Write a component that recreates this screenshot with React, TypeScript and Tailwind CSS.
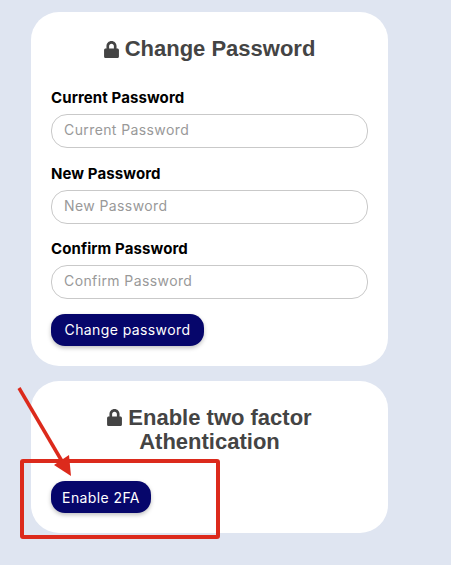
import { FaLock } from "react-icons/fa";

const fields = ["Current Password", "New Password", "Confirm Password"];

const btn =
  "h-[32px] rounded-[14px] bg-[#06066b] text-[14px] tracking-[0.4px] text-white shadow-[0_2px_4px_rgba(0,0,0,0.25)] [font-family:Inter,sans-serif]";

const App = () => {
  return (
    <div className="relative h-[565px] w-[451px] overflow-hidden bg-[#dfe5f1] pt-3 [font-family:'Liberation_Sans',Arial,sans-serif]">
      <div className="ml-[31px] flex w-[357px] flex-col gap-[15px]">
        <section className="h-[354px] rounded-[28px] bg-white px-5 pt-[24px]">
          <h2 className="flex items-center justify-center gap-[6px] text-[22px] leading-[26px] font-bold text-[#444]">
            <FaLock className="h-[17px] w-[15px]" />
            Change Password
          </h2>
          <form className="mt-[26px] flex flex-col gap-[15.5px]">
            {fields.map((f) => (
              <div key={f} className="flex flex-col gap-[6px]">
                <label className="text-[15px] leading-[20px] font-bold tracking-[0.1px] text-black [font-family:Inter,sans-serif]">
                  {f}
                </label>
                <input
                  placeholder={f}
                  className="h-[34px] w-full rounded-[16px] border border-[#c9c9c9] bg-white px-[12px] pb-[3px] text-[14px] tracking-[0.4px] outline-none [font-family:Inter,sans-serif] placeholder:text-[#999]"
                />
              </div>
            ))}
          </form>
          <button className={`${btn} mt-[15px] w-[153px] pb-px`}>Change password</button>
        </section>
        <section className="h-[152px] rounded-[28px] bg-white px-5 pt-[25px]">
          <h2 className="text-center text-[22px] leading-[24px] font-bold text-[#444]">
            <FaLock className="mr-[6px] inline h-[17px] w-[15px] align-[-1px]" />
            Enable two factor
            <br />
            Athentication
          </h2>
          <button className={`${btn} mt-[27px] w-[100px]`}>Enable 2FA</button>
        </section>
      </div>

      {/* red annotation drawn over the screenshot */}
      <svg className="absolute top-0 left-0" width="451" height="565" fill="none">
        <rect x="22" y="461" width="196" height="76" stroke="#dc2a1c" strokeWidth="4" rx="1" />
        <path d="M19 388 L63 463" stroke="#dc2a1c" strokeWidth="3.5" />
        <path d="M71 476 L54 465 L69 455 Z" fill="#dc2a1c" />
      </svg>
    </div>
  );
};

export default App;
